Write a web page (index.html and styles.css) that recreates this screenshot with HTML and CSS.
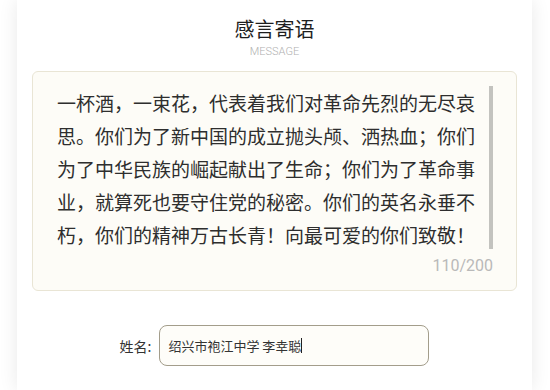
FILE: index.html
```html
<!DOCTYPE html>
<html lang="zh-CN">
<head>
<meta charset="utf-8">
<title>感言寄语</title>
<link rel="stylesheet" href="styles.css">
</head>
<body>
<div class="card">
  <header class="head">
    <h1 class="title">感言寄语</h1>
    <div class="subtitle">MESSAGE</div>
  </header>
  <div class="msg">
    <div class="msg-body">
      <p class="msg-text">一杯酒，一束花，代表着我们对革命先烈的无尽哀思。你们为了新中国的成立抛头颅、洒热血；你们为了中华民族的崛起献出了生命；你们为了革命事业，就算死也要守住党的秘密。你们的英名永垂不朽，你们的精神万古长青！向最可爱的你们致敬！</p>
      <div class="scroll"></div>
    </div>
    <div class="count">110/200</div>
  </div>
  <div class="name-row">
    <label class="name-label">姓名:</label>
    <div class="name-input"><span>绍兴市袍江中学 李幸聪</span><span class="caret"></span></div>
  </div>
</div>
</body>
</html>
```

FILE: styles.css
```css
html, body {
  margin: 0;
  padding: 0;
  background: #ffffff;
}
body {
  font-family: "Noto Sans CJK SC", "Noto Sans", sans-serif;
  overflow: hidden;
  height: 390px;
}
.card {
  box-sizing: border-box;
  margin-left: 17px;
  width: 515px;
  height: 390px;
  padding: 17px 15px 0 15px;
  background: #ffffff;
  box-shadow: 0 0 18px rgba(0, 0, 0, 0.09);
}
.head {
  text-align: center;
}
.title {
  margin: 0;
  font-size: 20px;
  line-height: 24px;
  font-weight: 400;
  color: #1e1e1e;
}
.subtitle {
  margin-top: 4px;
  font-family: Roboto, "Liberation Sans", sans-serif;
  font-weight: 300;
  font-size: 11px;
  line-height: 14px;
  color: #b0b0b0;
}
.msg {
  margin-top: 12px;
  background: #fdfcf7;
  border: 1px solid #e9e5d5;
  border-radius: 6px;
  padding: 14px 23px 14px 24px;
}
.msg-body {
  display: flex;
  justify-content: space-between;
}
.msg-text {
  margin: 0;
  width: 425px;
  font-size: 19px;
  line-height: 33px;
  color: #2e2e2e;
}
.scroll {
  width: 4px;
  height: 163px;
  background: #c3c3bf;
  flex: none;
}
.count {
  text-align: right;
  font-family: Roboto, "Liberation Sans", sans-serif;
  font-size: 16px;
  line-height: 20px;
  color: #b9b9b9;
  margin-top: 5px;
}
.name-row {
  margin-top: 34px;
  display: flex;
  justify-content: center;
  align-items: center;
  gap: 8px;
}
.name-label {
  font-size: 14px;
  color: #333;
}
.name-input {
  width: 260px;
  height: 39px;
  border: 1px solid #a39d8b;
  border-radius: 8px;
  background: #fefdf9;
  display: flex;
  align-items: center;
  padding-left: 8px;
  font-size: 13px;
  color: #333;
}
.caret {
  display: inline-block;
  width: 1px;
  height: 15px;
  background: #222;
}
```
